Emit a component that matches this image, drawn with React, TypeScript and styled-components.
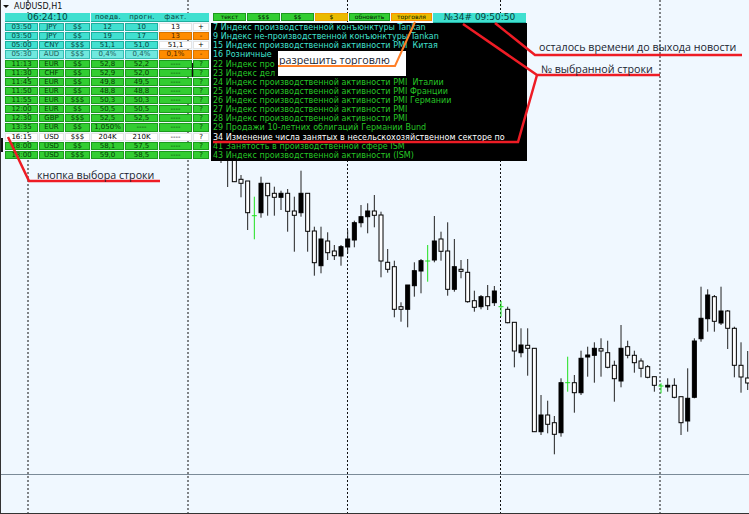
import React from 'react';
import styled, { createGlobalStyle } from 'styled-components';

const GlobalStyle = createGlobalStyle`
  html, body {
    margin: 0;
    padding: 0;
    background: #f0f8ff;
  }
`;

type Tone = 'teal' | 'pale' | 'green' | 'white' | 'orange';

const toneFill: Record<Tone, string> = {
  teal: '#40e0d0',
  pale: '#70e8de',
  green: '#32cd32',
  white: '#ffffff',
  orange: '#ff8c00',
};

const toneEdge: Record<Tone, string> = {
  teal: '#1fae9e',
  pale: '#37bdb3',
  green: '#1c9a1c',
  white: '#e4e4e4',
  orange: '#d87400',
};

const toneText: Record<Tone, string> = {
  teal: '#063f3a',
  pale: '#1f5a58',
  green: '#053a05',
  white: '#000000',
  orange: '#4a2800',
};

const Screen = styled.div`
  position: relative;
  width: 749px;
  height: 514px;
  overflow: hidden;
  background: #f0f8ff;
  box-sizing: border-box;
  border-left: 1px solid #333;
  border-bottom: 1px solid #333;
  font-family: 'DejaVu Sans', sans-serif;
`;

const Chart = styled.svg`
  position: absolute;
  left: -1px;
  top: 0;
`;

const Content = styled.div`
  position: relative;
`;

const TitleBar = styled.div`
  display: flex;
  align-items: center;
  gap: 5px;
  height: 12px;
  padding: 1px 0 0 2px;
  box-sizing: border-box;
  font-size: 8px;
  color: #111;
`;

const Caret = styled.span`
  width: 0;
  height: 0;
  border-left: 3px solid transparent;
  border-right: 3px solid transparent;
  border-top: 3px solid #111;
`;

const Dashboard = styled.div`
  display: flex;
  gap: 2px;
  padding: 1px 0 0 4px;
`;

const LeftPanel = styled.div`
  display: flex;
  flex-direction: column;
  gap: 1px;
  width: 204px;
`;

const HeaderRow = styled.div`
  display: flex;
  gap: 1px;
  height: 9px;
`;

const Clock = styled.div`
  width: 85px;
  background: #40e0d0;
  border-bottom: 1px solid #1fae9e;
  color: #063f3a;
  font-size: 9px;
  line-height: 9px;
  text-align: center;
`;

const HeaderLabels = styled.div`
  display: flex;
  flex: 1;
  background: #40e0d0;
  border-bottom: 1px solid #1fae9e;
  color: #063f3a;
  font-size: 7px;
  line-height: 9px;
  letter-spacing: 0.3px;
`;

const HeaderLabel = styled.span<{ $width: number }>`
  width: ${(p) => p.$width}px;
  text-align: center;
`;

const Table = styled.div`
  display: grid;
  grid-template-columns: 33px 25px 25px 33px 33px 33px 16px;
  grid-auto-rows: 8.13px;
  gap: 1px;
`;

const Cell = styled.div<{ $tone: Tone }>`
  box-sizing: border-box;
  background: ${(p) => toneFill[p.$tone]};
  border: 1px solid ${(p) => toneEdge[p.$tone]};
  color: ${(p) => toneText[p.$tone]};
  font-size: 7px;
  line-height: 6.5px;
  text-align: center;
  white-space: nowrap;
`;

const RightPanel = styled.div`
  display: flex;
  flex-direction: column;
  width: 316px;
`;

const ButtonRow = styled.div`
  display: grid;
  grid-template-columns: 33px 33px 33px 33px 41px 41px 93px;
  gap: 1px;
  height: 9px;
  margin: 0 0 1px 2px;
`;

const ToolButton = styled.div<{ $fill: string; $edge: string }>`
  box-sizing: border-box;
  height: 8px;
  background: ${(p) => p.$fill};
  border: 1px solid ${(p) => p.$edge};
  color: #052005;
  font-size: 6px;
  line-height: 6px;
  text-align: center;
  white-space: nowrap;
`;

const CountdownLabel = styled.div`
  background: #40e0d0;
  border-bottom: 1px solid #1fae9e;
  color: #063f3a;
  font-size: 9px;
  line-height: 9px;
  text-align: center;
  white-space: nowrap;
`;

const NewsList = styled.div`
  display: grid;
  grid-auto-rows: 9.13px;
  height: 138px;
  padding: 0 0 0 2px;
  background: #000;
  font-size: 8px;
  line-height: 9.13px;
  letter-spacing: 0.03px;
  white-space: pre;
`;

const NewsItem = styled.div<{ $color: string }>`
  color: ${(p) => p.$color};
`;

const Drawing = styled.svg`
  position: absolute;
  left: -1px;
  top: 0;
  pointer-events: none;
`;

const Callout = styled.div<{ $left: number; $top: number }>`
  position: absolute;
  left: ${(p) => p.$left}px;
  top: ${(p) => p.$top}px;
  color: #1a2430;
  font-family: 'Open Sans', sans-serif;
  font-size: 10.7px;
  line-height: 14px;
  white-space: nowrap;
`;

const TradeNote = styled.div`
  position: absolute;
  left: 277px;
  top: 51px;
  width: 128px;
  height: 25px;
  padding-left: 1px;
  box-sizing: border-box;
  background: #fff;
  color: #1a2430;
  font-family: 'Open Sans', sans-serif;
  font-size: 10.7px;
  line-height: 19px;
  white-space: nowrap;
`;

type Row = {
  cells: string[];
  tone: Tone;
  factTone?: Tone;
};

const waiting = ['----', '?'];

const rows: Row[] = [
  { cells: ['03:50', 'JPY', '$$', '12', '10', '13', '+'], tone: 'teal', factTone: 'white' },
  { cells: ['03:50', 'JPY', '$$', '19', '17', '13', '-'], tone: 'teal', factTone: 'orange' },
  { cells: ['05:00', 'CNY', '$$$', '51,1', '51,0', '51,1', '+'], tone: 'teal', factTone: 'white' },
  { cells: ['05:30', 'AUD', '$$$', '0,4%', '0,4%', '0,1%', '-'], tone: 'pale', factTone: 'orange' },
  { cells: ['11:13', 'EUR', '$$', '52,8', '52,2', ...waiting], tone: 'green' },
  { cells: ['11:30', 'CHF', '$$', '52,9', '52,0', ...waiting], tone: 'green' },
  { cells: ['11:45', 'EUR', '$$', '49,8', '49,5', ...waiting], tone: 'green' },
  { cells: ['11:50', 'EUR', '$$', '48,8', '48,8', ...waiting], tone: 'green' },
  { cells: ['11:55', 'EUR', '$$$', '50,3', '50,3', ...waiting], tone: 'green' },
  { cells: ['12:00', 'EUR', '$$', '50,5', '50,5', ...waiting], tone: 'green' },
  { cells: ['12:30', 'GBP', '$$$', '52,5', '52,5', ...waiting], tone: 'green' },
  { cells: ['13:35', 'EUR', '$$', '1,050%', '----', ...waiting], tone: 'green' },
  { cells: ['16:15', 'USD', '$$$', '204K', '210K', ...waiting], tone: 'white' },
  { cells: ['18:00', 'USD', '$$', '58,1', '57,5', ...waiting], tone: 'green' },
  { cells: ['18:00', 'USD', '$$$', '59,0', '58,5', ...waiting], tone: 'green' },
];

const buttons = [
  { label: 'текст', fill: '#32cd32', edge: '#1c9a1c' },
  { label: '$$$', fill: '#32cd32', edge: '#1c9a1c' },
  { label: '$$', fill: '#32cd32', edge: '#1c9a1c' },
  { label: '$', fill: '#e9bb00', edge: '#f0a000' },
  { label: 'обновить', fill: '#32cd32', edge: '#1c9a1c' },
  { label: 'торговля', fill: '#e9bb00', edge: '#ff8c00' },
];

const TEAL = '#40e0d0';
const GREEN = '#26c626';

const news = [
  { text: '7 Индекс производственной конъюнктуры Tankan', color: TEAL },
  { text: '9 Индекс не-производственной конъюнктуры Tankan', color: TEAL },
  { text: '15 Индекс производственной активности PMI  Китая', color: TEAL },
  { text: '16 Розничные', color: TEAL },
  { text: '22 Индекс про', color: GREEN },
  { text: '23 Индекс дел', color: GREEN },
  { text: '24 Индекс производственной активности PMI  Италии', color: GREEN },
  { text: '25 Индекс производственной активности PMI Франции', color: GREEN },
  { text: '26 Индекс производственной активности PMI Германии', color: GREEN },
  { text: '27 Индекс производственной активности PMI', color: GREEN },
  { text: '28 Индекс производственной активности PMI ', color: GREEN },
  { text: '29 Продажи 10-летних облигаций Германии Bund', color: GREEN },
  { text: '34 Изменение числа занятых в несельскохозяйственном секторе по', color: '#ffffff' },
  { text: '41 Занятость в производственной сфере ISM', color: GREEN },
  { text: '43 Индекс производственной активности (ISM)', color: GREEN },
];

// [high, low, body top, body bottom, kind], one bar every 6.667px from x=221
type Bar = [number, number, number, number, 'w' | 'b' | 'g'];

const bars: Bar[] = [
  [150, 163, 150, 155, 'w'], [150, 187, 150, 160, 'w'], [150, 182, 155, 181.7, 'w'],
  [175, 197.3, 179.3, 183.3, 'w'], [181, 230, 181, 212.7, 'w'], [196.7, 239.3, 215.7, 215.7, 'g'],
  [176.7, 217.7, 183.3, 212.7, 'b'], [183.3, 215.7, 183.3, 195.7, 'w'], [186.7, 215.7, 193.3, 197.3, 'w'],
  [190.7, 210, 193.3, 197.3, 'b'], [189, 231.7, 193.3, 211.3, 'w'], [196.7, 251.7, 211, 215.3, 'w'],
  [170.7, 216.7, 193.3, 212.7, 'b'], [193.3, 251.7, 193.3, 231.3, 'w'], [226.7, 275.7, 231, 262.7, 'w'],
  [226.7, 273.3, 239, 265.7, 'b'], [232.3, 260, 241, 252.7, 'w'], [245, 260, 251, 255.7, 'w'],
  [245, 265.7, 246.7, 256, 'b'], [230, 253.3, 239, 247, 'b'], [220.7, 247.3, 222.7, 240, 'b'],
  [205, 227.3, 216.7, 222.7, 'b'], [203.3, 233.3, 211, 216.7, 'b'], [195, 227.3, 211, 215.3, 'w'],
  [211.7, 277.3, 215, 261, 'w'], [249, 272.7, 262.3, 269.3, 'w'], [260.7, 317.3, 266.7, 309.3, 'w'],
  [302.3, 321.7, 306.7, 309.3, 'w'], [285, 327.3, 285, 309.3, 'b'], [262.3, 296.7, 270.7, 285.7, 'b'],
  [259, 293.3, 260.7, 271, 'b'], [245, 281.7, 261, 261, 'g'], [216, 262.3, 241, 260, 'b'],
  [231.7, 260.7, 239, 251.3, 'w'], [222.3, 295.7, 251, 289.3, 'w'], [239, 291.7, 266.7, 289.3, 'b'],
  [260, 278.3, 269.3, 271.3, 'w'], [259, 302.7, 272.3, 301.7, 'w'], [290.7, 311.7, 300.7, 307.3, 'w'],
  [295, 309.3, 296.7, 306.7, 'b'], [285, 310, 296.7, 305.7, 'w'], [286, 306, 291, 302.7, 'b'],
  [301, 316.7, 306.7, 306.7, 'g'], [306.7, 323.3, 309.3, 322.7, 'w'], [322.3, 367.3, 322.3, 351, 'w'],
  [328.3, 357.3, 345, 352.7, 'b'], [328.3, 375.7, 345.3, 348.3, 'w'], [348, 432, 348.3, 431.7, 'w'],
  [395, 435, 415, 431.7, 'b'], [400.7, 433.3, 415, 424.3, 'w'], [416, 454.3, 422.7, 434.3, 'w'],
  [378.3, 436.7, 382.7, 432.7, 'b'], [356.7, 391.7, 382.7, 382.7, 'g'], [375, 412.7, 382.7, 392.7, 'w'],
  [350.7, 395, 358.3, 392.7, 'b'], [346.7, 376.7, 355, 357, 'b'], [342.3, 382.7, 348.3, 355.3, 'b'],
  [338.3, 376.7, 348.7, 351, 'w'], [340.7, 368.3, 352.7, 367.3, 'w'], [360.7, 401.7, 365.3, 378.7, 'w'],
  [325, 387.3, 348.3, 381, 'b'], [340.7, 358.3, 346.7, 355.3, 'w'], [350.7, 372.7, 355.3, 362.7, 'w'],
  [358.3, 377.3, 361, 368.3, 'w'], [365, 378.3, 366.7, 377.3, 'w'], [376.7, 391.7, 376.7, 385.3, 'w'],
  [383.3, 393.3, 386, 386, 'g'], [378.3, 391.7, 385.3, 387, 'b'], [378.3, 398.3, 385.3, 397.3, 'w'],
  [396.7, 435, 396.7, 422.7, 'w'], [368.3, 431.7, 398.3, 421, 'b'], [338.3, 398.3, 341, 397.3, 'b'],
  [286.7, 341.7, 318.3, 338.7, 'b'], [289.3, 331.7, 295, 318.7, 'b'], [295, 331.7, 296.7, 321.3, 'w'],
  [286.7, 325, 311, 323, 'b'], [310, 349, 311, 328.3, 'w'], [326.7, 377.3, 328.3, 365.3, 'w'],
  [342.3, 392.7, 365.3, 377, 'w'], [351, 390, 378, 383, 'w'],
];

const gridLines = [28, 188, 347.5, 500.5, 660];

const CandleChart: React.FC = () => (
  <Chart width={749} height={514}>
    {gridLines.map((x) => (
      <line key={x} x1={x} x2={x} y1={0} y2={514} stroke="#111" strokeDasharray="2 2" />
    ))}
    <line x1={0} x2={749} y1={474.5} y2={474.5} stroke="#7b8b98" />
    <line x1={2} x2={2} y1={138} y2={152} stroke="#111" strokeWidth={2} />
    <line x1={192.5} x2={192.5} y1={63} y2={77} stroke="#111" />
    {bars.map(([high, low, top, bottom, kind], i) => {
      const x = 221 + i * 6.667;
      if (kind === 'g') {
        return (
          <g key={i} stroke="#1fe01f">
            <line x1={x} x2={x} y1={high} y2={low} />
            <line x1={x - 2.5} x2={x + 2.5} y1={top} y2={top} />
          </g>
        );
      }
      return (
        <g key={i}>
          <line x1={x} x2={x} y1={high} y2={low} stroke="#222" />
          <rect
            x={x - 2}
            y={top}
            width={4}
            height={bottom - top}
            fill={kind === 'b' ? '#000' : '#fff'}
            stroke="#000"
          />
        </g>
      );
    })}
  </Chart>
);

export default function App() {
  return (
    <Screen>
      <GlobalStyle />
      <CandleChart />
      <Content>
        <TitleBar>
          <Caret />
          AUDUSD,H1
        </TitleBar>
        <Dashboard>
          <LeftPanel>
            <HeaderRow>
              <Clock>06:24:10</Clock>
              <HeaderLabels>
                <HeaderLabel $width={34}>поедв.</HeaderLabel>
                <HeaderLabel $width={34}>прогн.</HeaderLabel>
                <HeaderLabel $width={33}>факт.</HeaderLabel>
              </HeaderLabels>
            </HeaderRow>
            <Table>
              {rows.map((row, r) =>
                row.cells.map((value, c) => (
                  <Cell key={`${r}-${c}`} $tone={c >= 5 && row.factTone ? row.factTone : row.tone}>
                    {value}
                  </Cell>
                )),
              )}
            </Table>
          </LeftPanel>
          <RightPanel>
            <ButtonRow>
              {buttons.map((b) => (
                <ToolButton key={b.label} $fill={b.fill} $edge={b.edge}>
                  {b.label}
                </ToolButton>
              ))}
              <CountdownLabel>№34# 09:50:50</CountdownLabel>
            </ButtonRow>
            <NewsList>
              {news.map((n) => (
                <NewsItem key={n.text} $color={n.color}>
                  {n.text}
                </NewsItem>
              ))}
            </NewsList>
          </RightPanel>
        </Dashboard>
      </Content>
      <TradeNote>разрешить торговлю</TradeNote>
      <Drawing width={749} height={514} fill="none" strokeLinejoin="miter">
        <g stroke="#ee1c25" strokeWidth={2.5}>
          <polyline points="8,137 29,181 160,181" />
          <polyline points="495,23 535,55 742,55" />
          <polyline points="463,24 537,75 660,75" />
          <polyline points="537,75 518,142 213,142" />
        </g>
        <polyline points="278,66 395,66 415,22" stroke="#ff7f27" strokeWidth={2} />
      </Drawing>
      <Callout $left={36} $top={168}>кнопка выбора строки</Callout>
      <Callout $left={538} $top={40}>осталось времени до выхода новости</Callout>
      <Callout $left={540} $top={62}>№ выбранной строки</Callout>
    </Screen>
  );
}
